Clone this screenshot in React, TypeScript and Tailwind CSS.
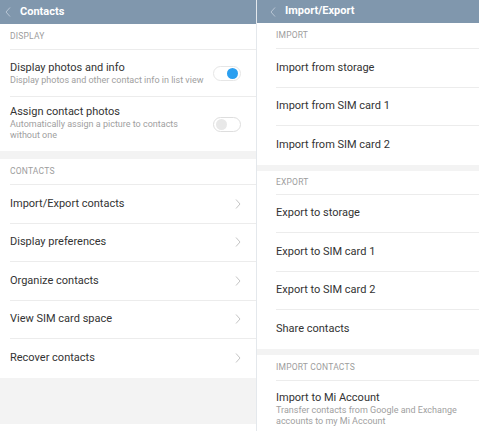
import React from "react";

const font = { fontFamily: "Roboto, 'Noto Sans', sans-serif" };

const Back = () => (
  <svg width="6" height="10" viewBox="0 0 6 10" className="shrink-0">
    <path d="M5 0.5 L1 5 L5 9.5" fill="none" stroke="#b8c5d3" strokeWidth="1" />
  </svg>
);

const Chevron = () => (
  <svg width="6" height="10" viewBox="0 0 6 10" className="shrink-0">
    <path d="M1 0.5 L5 5 L1 9.5" fill="none" stroke="#c4c4c4" strokeWidth="1" />
  </svg>
);

const Toggle = ({ on }: { on: boolean }) => (
  <div
    className={`flex h-[15px] w-[28px] items-center rounded-full border px-[2px] ${
      on ? "justify-end border-[#e6e6e6] bg-white" : "justify-start border-[#dedede] bg-white"
    }`}
  >
    <div className={`h-[11px] w-[11px] rounded-full ${on ? "bg-[#2a9ff0]" : "bg-[#e8e8e8]"}`} />
  </div>
);

const Header = ({ title, cls }: { title: string; cls: string }) => (
  <div className={`flex items-center gap-[9px] bg-[#8097ad] ${cls}`}>
    <Back />
    <span className="text-[11px] font-bold text-white">{title}</span>
  </div>
);

const Label = ({ text, h }: { text: string; h: string }) => (
  <div className={`flex items-center ${h}`}>
    <span className="text-[8.5px] tracking-[0.2px] text-[#9d9d9d]">{text}</span>
  </div>
);

const NavRow = ({ text, chevron = true, last = false }: { text: string; chevron?: boolean; last?: boolean }) => (
  <div className={`flex h-[38.5px] items-center justify-between pr-[15px] ${last ? "" : "border-b border-[#ececec]"}`}>
    <span className="text-[11px] text-[#333]">{text}</span>
    {chevron && <Chevron />}
  </div>
);

export default function App() {
  return (
    <div className="flex h-[431px] w-[479px] overflow-hidden bg-white" style={font}>
      {/* Contacts settings */}
      <div className="flex w-[256px] flex-col bg-[#f3f3f3]">
        <Header title="Contacts" cls="h-[24px] pl-[5px]" />
        <div className="bg-white pl-[10px]">
          <Label text="DISPLAY" h="h-[25px]" />
          <div className="border-t border-[#ececec]" />
          <div className="flex h-[47px] items-center justify-between border-b border-[#ececec] pr-[15px]">
            <div className="flex flex-col">
              <span className="text-[11px] leading-[14px] text-[#333]">Display photos and info</span>
              <span className="text-[9px] leading-[11px] text-[#a0a0a0]">
                Display photos and other contact info in list view
              </span>
            </div>
            <Toggle on />
          </div>
          <div className="flex h-[54px] items-center justify-between pr-[15px]">
            <div className="flex flex-col pb-[3px]">
              <span className="text-[11px] leading-[14px] text-[#333]">Assign contact photos</span>
              <span className="w-[168px] text-[9px] leading-[11px] text-[#a0a0a0]">
                Automatically assign a picture to contacts without one
              </span>
            </div>
            <Toggle on={false} />
          </div>
        </div>
        <div className="h-[8px]" />
        <div className="bg-white pl-[10px]">
          <Label text="CONTACTS" h="h-[25px]" />
          <div className="border-t border-[#ececec]" />
          <NavRow text="Import/Export contacts" />
          <NavRow text="Display preferences" />
          <NavRow text="Organize contacts" />
          <NavRow text="View SIM card space" />
          <NavRow text="Recover contacts" last />
        </div>
        <div className="h-[46px]" />
        <div className="flex-1 bg-white" />
      </div>

      <div className="w-[1px] bg-[#e4e8ec]" />

      {/* Import/Export */}
      <div className="flex flex-1 flex-col bg-[#f3f3f3]">
        <Header title="Import/Export" cls="h-[23px] pl-[13px]" />
        <div className="bg-white pl-[19px]">
          <Label text="IMPORT" h="h-[25px]" />
          <div className="border-t border-[#ececec]" />
          <NavRow text="Import from storage" chevron={false} />
          <NavRow text="Import from SIM card 1" chevron={false} />
          <NavRow text="Import from SIM card 2" chevron={false} last />
        </div>
        <div className="h-[6px]" />
        <div className="bg-white pl-[19px]">
          <Label text="EXPORT" h="h-[23px]" />
          <div className="border-t border-[#ececec]" />
          <NavRow text="Export to storage" chevron={false} />
          <NavRow text="Export to SIM card 1" chevron={false} />
          <NavRow text="Export to SIM card 2" chevron={false} />
          <NavRow text="Share contacts" chevron={false} last />
        </div>
        <div className="h-[6px]" />
        <div className="flex-1 bg-white pl-[19px]">
          <Label text="IMPORT CONTACTS" h="h-[25px]" />
          <div className="border-t border-[#ececec]" />
          <div className="flex flex-col pt-[10px]">
            <span className="text-[11px] leading-[14px] text-[#333]">Import to Mi Account</span>
            <span className="w-[190px] text-[9px] leading-[11px] text-[#a0a0a0]">
              Transfer contacts from Google and Exchange accounts to my Mi Account
            </span>
          </div>
        </div>
      </div>
    </div>
  );
}
